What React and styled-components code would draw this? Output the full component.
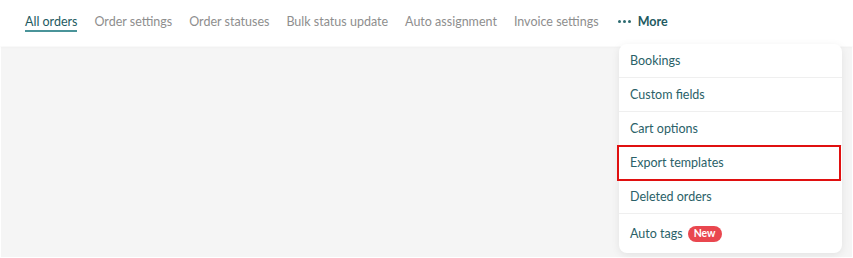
import React from 'react'
import styled, { createGlobalStyle } from 'styled-components'

const GlobalStyle = createGlobalStyle`
  body {
    margin: 0;
    background: #fff;
    font-family: Lato, 'Liberation Sans', sans-serif;
  }
`

const Page = styled.div`
  position: relative;
  width: 853px;
  height: 258px;
  display: flex;
  flex-direction: column;
  background: #fff;
  overflow: hidden;
`

const TopBar = styled.nav`
  height: 46px;
  display: flex;
  align-items: flex-start;
  gap: 17px;
  padding: 0 0 0 25px;
  box-shadow: 0 1px 3px rgba(0, 0, 0, 0.04);
  position: relative;
  z-index: 1;
`

const Tab = styled.div`
  padding-top: 13px;
  height: 17px;
  font-size: 12.5px;
  color: ${({ $active }) => ($active ? '#1e5a61' : '#8e8e8e')};
  border-bottom: ${({ $active }) => ($active ? '2px solid #4a9499' : '2px solid transparent')};
  white-space: nowrap;
  display: flex;
  align-items: center;
  gap: 7px;
`

const Dots = styled.span`
  display: flex;
  gap: 2px;
  margin-left: 2px;
  span {
    width: 3px;
    height: 3px;
    border-radius: 50%;
    background: #2c6a70;
  }
`

const More = styled.span`
  color: #1e5a61;
  font-weight: 700;
`

const Body = styled.main`
  flex: 1;
  margin: 1px;
  background: #f5f5f5;
`

const Menu = styled.ul`
  position: absolute;
  left: 619px;
  top: 44px;
  width: 223px;
  margin: 0;
  padding: 0;
  list-style: none;
  background: #fff;
  border-radius: 8px;
  box-shadow: 0 2px 8px rgba(0, 0, 0, 0.08);
  z-index: 2;
`

const Item = styled.li`
  position: relative;
  height: ${({ $tall }) => ($tall ? '39px' : '33px')};
  display: flex;
  align-items: center;
  gap: 5px;
  padding-left: 11px;
  font-size: 12.5px;
  color: #2a6168;
  border-bottom: ${({ $last }) => ($last ? 'none' : '1px solid #efefef')};

  &::after {
    content: '';
    display: ${({ $marked }) => ($marked ? 'block' : 'none')};
    position: absolute;
    left: -2px;
    right: 1px;
    top: -1px;
    bottom: -2px;
    border: 2px solid #e01010;
  }
`

const Badge = styled.span`
  background: #e9474f;
  color: #fff;
  font-size: 10.5px;
  font-weight: 700;
  border-radius: 8px;
  padding: 1px 6px 2px;
  line-height: 13px;
`

const tabs = ['All orders', 'Order settings', 'Order statuses', 'Bulk status update', 'Auto assignment', 'Invoice settings']
const items = ['Bookings', 'Custom fields', 'Cart options', 'Export templates', 'Deleted orders']

export default function App() {
  return (
    <Page>
      <GlobalStyle />
      <TopBar>
        {tabs.map((t, i) => (
          <Tab key={t} $active={i === 0}>{t}</Tab>
        ))}
        <Tab>
          <Dots><span /><span /><span /></Dots>
          <More>More</More>
        </Tab>
      </TopBar>
      <Body />
      <Menu>
        {items.map((it) => (
          <Item key={it} $marked={it === 'Export templates'}>{it}</Item>
        ))}
        <Item $tall $last>
          Auto tags <Badge>New</Badge>
        </Item>
      </Menu>
    </Page>
  )
}
